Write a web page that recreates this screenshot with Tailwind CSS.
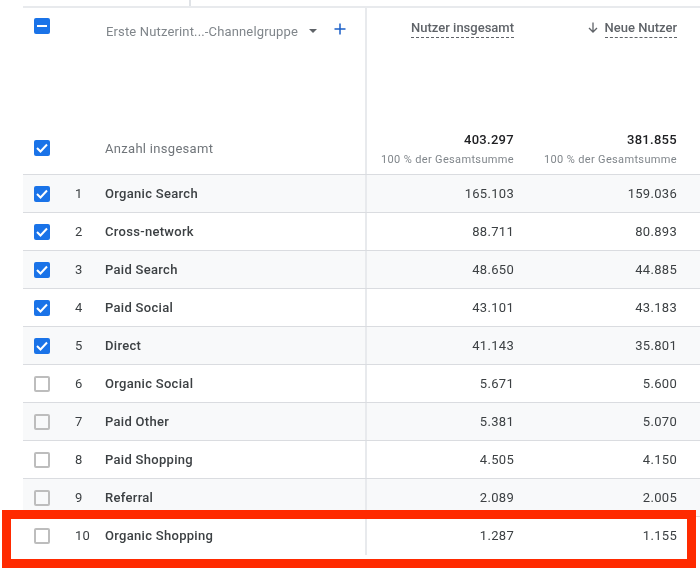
<!DOCTYPE html>
<html lang="de">
<head>
    <meta charset="UTF-8">
    <title>Erste Nutzerinteraktion</title>
    <script src="https://cdn.jsdelivr.net/npm/@tailwindcss/browser@4"></script>
</head>
<body class="bg-white w-[700px] h-[570px] overflow-hidden relative font-['Roboto',sans-serif] text-[13px] tracking-[0.3px] text-[#3c4043]">

    <div class="blur-[0.35px]">
    <!-- stub of the cell above the table -->
    <div class="ml-[189px] w-[2px] h-[6px] bg-[#e0e3e7]"></div>

    <div class="ml-[23px] border-t-2 border-[#e8eaed]">

        <!-- Header -->
        <div class="flex h-[112px]">
            <div class="w-[344px] flex items-start border-r-2 border-[#e8eaed]">
                <div class="w-[83px] pl-[11px] pt-[10px] shrink-0">
                    <div class="w-[16px] h-[16px] rounded-[2px] bg-[#1a73e8] flex items-center justify-center">
                        <div class="w-[10px] h-[2px] bg-white"></div>
                    </div>
                </div>
                <span class="pt-[14px] text-[#80868b] whitespace-nowrap tracking-[0.15px]">Erste Nutzerint...-Channelgruppe</span>
                <svg class="ml-[11px] mt-[21px] shrink-0" width="8" height="4" viewBox="0 0 8 4"><path d="M0 0h8L4 4z" fill="#5f6368"/></svg>
                <svg class="ml-[17px] mt-[15px] shrink-0" width="12" height="12" viewBox="0 0 12 12"><path d="M6 0.5v11M0.5 6h11" stroke="#1a5fc8" stroke-width="1.5" fill="none"/></svg>
            </div>
            <div class="w-[172px] pr-[25px] pt-[11px] flex justify-end items-start">
                <span class="text-[#5f6368] font-medium leading-[18px] border-b border-dashed border-[#5f6368] tracking-[0px]">Nutzer insgesamt</span>
            </div>
            <div class="flex-1 pr-[23px] pt-[11px] flex justify-end items-start">
                <svg class="mt-[3px] mr-[7px]" width="10" height="11" viewBox="0 0 10 11"><path d="M5 0.5v9M1 6l4 4 4-4" stroke="#5f6368" stroke-width="1.3" fill="none"/></svg>
                <span class="text-[#5f6368] font-medium leading-[18px] border-b border-dashed border-[#5f6368] tracking-[0px]">Neue Nutzer</span>
            </div>
        </div>

        <!-- Totals -->
        <div class="flex h-[55px] border-b border-[#dadce0]">
            <div class="w-[344px] flex items-start border-r-2 border-[#e8eaed]">
                <div class="w-[82px] pl-[11px] pt-[20px] shrink-0">
                    <div class="w-[16px] h-[16px] rounded-[2px] bg-[#1a73e8] flex items-center justify-center">
                        <svg width="12" height="10" viewBox="0 0 12 10"><path d="M1 5l3.5 3.5L11 1.5" stroke="#fff" stroke-width="2" fill="none"/></svg>
                    </div>
                </div>
                <span class="pt-[19px] text-[#70757a]">Anzahl insgesamt</span>
            </div>
            <div class="w-[172px] pr-[25px] pt-[11px] flex flex-col items-end">
                <span class="font-medium text-[#202124] leading-[18px]">403.297</span>
                <span class="text-[11px] text-[#80868b] leading-[14px] mt-[4px] tracking-[0.35px]">100 % der Gesamtsumme</span>
            </div>
            <div class="flex-1 pr-[23px] pt-[11px] flex flex-col items-end">
                <span class="font-medium text-[#202124] leading-[18px]">381.855</span>
                <span class="text-[11px] text-[#80868b] leading-[14px] mt-[4px] tracking-[0.35px]">100 % der Gesamtsumme</span>
            </div>
        </div>

        <!-- Rows -->
        <div class="flex h-[38px] items-stretch border-b border-[#dadce0] bg-[#f8f9fa]">
            <div class="w-[344px] flex items-center border-r-2 border-[#e8eaed]">
                <div class="w-[11px]"></div>
                <div class="w-[16px] h-[16px] rounded-[2px] bg-[#1a73e8] flex items-center justify-center"><svg width="12" height="10" viewBox="0 0 12 10"><path d="M1 5l3.5 3.5L11 1.5" stroke="#fff" stroke-width="2" fill="none"/></svg></div>
                <span class="w-[55px] pl-[25px]">1</span>
                <span class="font-medium">Organic Search</span>
            </div>
            <div class="w-[172px] pr-[25px] flex items-center justify-end">165.103</div>
            <div class="flex-1 pr-[23px] flex items-center justify-end">159.036</div>
        </div>
        <div class="flex h-[38px] items-stretch border-b border-[#dadce0]">
            <div class="w-[344px] flex items-center border-r-2 border-[#e8eaed]">
                <div class="w-[11px]"></div>
                <div class="w-[16px] h-[16px] rounded-[2px] bg-[#1a73e8] flex items-center justify-center"><svg width="12" height="10" viewBox="0 0 12 10"><path d="M1 5l3.5 3.5L11 1.5" stroke="#fff" stroke-width="2" fill="none"/></svg></div>
                <span class="w-[55px] pl-[25px]">2</span>
                <span class="font-medium">Cross-network</span>
            </div>
            <div class="w-[172px] pr-[25px] flex items-center justify-end">88.711</div>
            <div class="flex-1 pr-[23px] flex items-center justify-end">80.893</div>
        </div>
        <div class="flex h-[38px] items-stretch border-b border-[#dadce0] bg-[#f8f9fa]">
            <div class="w-[344px] flex items-center border-r-2 border-[#e8eaed]">
                <div class="w-[11px]"></div>
                <div class="w-[16px] h-[16px] rounded-[2px] bg-[#1a73e8] flex items-center justify-center"><svg width="12" height="10" viewBox="0 0 12 10"><path d="M1 5l3.5 3.5L11 1.5" stroke="#fff" stroke-width="2" fill="none"/></svg></div>
                <span class="w-[55px] pl-[25px]">3</span>
                <span class="font-medium">Paid Search</span>
            </div>
            <div class="w-[172px] pr-[25px] flex items-center justify-end">48.650</div>
            <div class="flex-1 pr-[23px] flex items-center justify-end">44.885</div>
        </div>
        <div class="flex h-[38px] items-stretch border-b border-[#dadce0]">
            <div class="w-[344px] flex items-center border-r-2 border-[#e8eaed]">
                <div class="w-[11px]"></div>
                <div class="w-[16px] h-[16px] rounded-[2px] bg-[#1a73e8] flex items-center justify-center"><svg width="12" height="10" viewBox="0 0 12 10"><path d="M1 5l3.5 3.5L11 1.5" stroke="#fff" stroke-width="2" fill="none"/></svg></div>
                <span class="w-[55px] pl-[25px]">4</span>
                <span class="font-medium">Paid Social</span>
            </div>
            <div class="w-[172px] pr-[25px] flex items-center justify-end">43.101</div>
            <div class="flex-1 pr-[23px] flex items-center justify-end">43.183</div>
        </div>
        <div class="flex h-[38px] items-stretch border-b border-[#dadce0] bg-[#f8f9fa]">
            <div class="w-[344px] flex items-center border-r-2 border-[#e8eaed]">
                <div class="w-[11px]"></div>
                <div class="w-[16px] h-[16px] rounded-[2px] bg-[#1a73e8] flex items-center justify-center"><svg width="12" height="10" viewBox="0 0 12 10"><path d="M1 5l3.5 3.5L11 1.5" stroke="#fff" stroke-width="2" fill="none"/></svg></div>
                <span class="w-[55px] pl-[25px]">5</span>
                <span class="font-medium">Direct</span>
            </div>
            <div class="w-[172px] pr-[25px] flex items-center justify-end">41.143</div>
            <div class="flex-1 pr-[23px] flex items-center justify-end">35.801</div>
        </div>
        <div class="flex h-[38px] items-stretch border-b border-[#dadce0]">
            <div class="w-[344px] flex items-center border-r-2 border-[#e8eaed]">
                <div class="w-[11px]"></div>
                <div class="w-[16px] h-[16px] rounded-[2px] border-2 border-[#bdbdbd]"></div>
                <span class="w-[55px] pl-[25px]">6</span>
                <span class="font-medium">Organic Social</span>
            </div>
            <div class="w-[172px] pr-[25px] flex items-center justify-end">5.671</div>
            <div class="flex-1 pr-[23px] flex items-center justify-end">5.600</div>
        </div>
        <div class="flex h-[38px] items-stretch border-b border-[#dadce0] bg-[#f8f9fa]">
            <div class="w-[344px] flex items-center border-r-2 border-[#e8eaed]">
                <div class="w-[11px]"></div>
                <div class="w-[16px] h-[16px] rounded-[2px] border-2 border-[#bdbdbd]"></div>
                <span class="w-[55px] pl-[25px]">7</span>
                <span class="font-medium">Paid Other</span>
            </div>
            <div class="w-[172px] pr-[25px] flex items-center justify-end">5.381</div>
            <div class="flex-1 pr-[23px] flex items-center justify-end">5.070</div>
        </div>
        <div class="flex h-[38px] items-stretch border-b border-[#dadce0]">
            <div class="w-[344px] flex items-center border-r-2 border-[#e8eaed]">
                <div class="w-[11px]"></div>
                <div class="w-[16px] h-[16px] rounded-[2px] border-2 border-[#bdbdbd]"></div>
                <span class="w-[55px] pl-[25px]">8</span>
                <span class="font-medium">Paid Shopping</span>
            </div>
            <div class="w-[172px] pr-[25px] flex items-center justify-end">4.505</div>
            <div class="flex-1 pr-[23px] flex items-center justify-end">4.150</div>
        </div>
        <div class="flex h-[38px] items-stretch border-b border-[#dadce0] bg-[#f8f9fa]">
            <div class="w-[344px] flex items-center border-r-2 border-[#e8eaed]">
                <div class="w-[11px]"></div>
                <div class="w-[16px] h-[16px] rounded-[2px] border-2 border-[#bdbdbd]"></div>
                <span class="w-[55px] pl-[25px]">9</span>
                <span class="font-medium">Referral</span>
            </div>
            <div class="w-[172px] pr-[25px] flex items-center justify-end">2.089</div>
            <div class="flex-1 pr-[23px] flex items-center justify-end">2.005</div>
        </div>
        <div class="flex h-[38px] items-stretch">
            <div class="w-[344px] flex items-center border-r-2 border-[#e8eaed]">
                <div class="w-[11px]"></div>
                <div class="w-[16px] h-[16px] rounded-[2px] border-2 border-[#bdbdbd]"></div>
                <span class="w-[55px] pl-[25px]">10</span>
                <span class="font-medium">Organic Shopping</span>
            </div>
            <div class="w-[172px] pr-[25px] flex items-center justify-end">1.287</div>
            <div class="flex-1 pr-[23px] flex items-center justify-end">1.155</div>
        </div>
    </div>
    </div>

    <!-- red highlight over the last row -->
    <div class="absolute left-[2px] top-[510px] w-[694px] h-[58px] border-[9px] border-[#ff2a00]"></div>
</body>
</html>
